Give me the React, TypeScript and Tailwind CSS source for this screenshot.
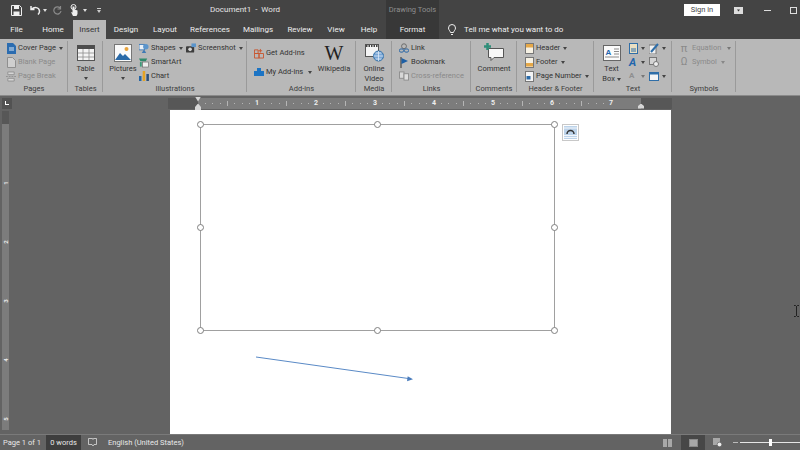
import type { ReactNode } from 'react'

/* ---------- small helpers ---------- */
function Caret({ className = 'border-t-[#444]' }: { className?: string }) {
  return <span className={`inline-block w-0 h-0 border-x-[2.5px] border-x-transparent border-t-[3px] ${className}`} />
}

function Group({ width, label, children }: { width: string; label: string; children: ReactNode }) {
  return (
    <div className={`${width} shrink-0 h-full flex flex-col relative`}>
      <div className="flex-1 flex min-h-0">{children}</div>
      <div className="h-[11px] pb-[1px] flex items-center justify-center text-[7.5px] leading-none text-[#3c3c3c]">{label}</div>
      <span className="absolute right-0 top-[2px] bottom-[3px] w-px bg-[#9a9a9a]" />
    </div>
  )
}

function Row({ icon, label, caret, off, gap = 'gap-[2px]' }: { icon: ReactNode; label: string; caret?: boolean; off?: boolean; gap?: string }) {
  return (
    <div className={`h-[14px] flex items-center ${gap} whitespace-nowrap ${off ? 'text-[#8a8a8a]' : 'text-[#333]'}`}>
      <span className="w-[10px] h-[11px] flex items-center justify-center shrink-0">{icon}</span>
      <span className="text-[7.5px] leading-none">{label}</span>
      {caret && <span className="ml-[1px] flex"><Caret className={off ? 'border-t-[#888]' : 'border-t-[#444]'} /></span>}
    </div>
  )
}

function Col({ className = '', children }: { className?: string; children: ReactNode }) {
  return <div className={`flex flex-col pt-[2px] ${className}`}>{children}</div>
}

function Large({ width, icon, lines, caret }: { width: string; icon: ReactNode; lines: string[]; caret?: boolean }) {
  return (
    <div className={`${width} shrink-0 flex flex-col items-center pt-[4px] text-[#333]`}>
      <div className="h-[19px] flex items-center justify-center">{icon}</div>
      <div className="mt-[2px] flex flex-col items-center text-[7.5px] leading-[10px] whitespace-nowrap">
        {lines.map((l) => <span key={l}>{l}</span>)}
        {caret && <span className="mt-[3px] flex"><Caret /></span>}
      </div>
    </div>
  )
}

/* ---------- ribbon icons ---------- */
const CoverIcon = (
  <svg width="9" height="11" viewBox="0 0 9 11"><path d="M0 0h6l3 3v8H0z" fill="#2b6cb0" /><path d="M2 5h5M2 7h5" stroke="#dbe8f5" /></svg>
)
const BlankIcon = (
  <svg width="9" height="11" viewBox="0 0 9 11"><path d="M.5.5h5l3 3v7h-8z" fill="#cfcfcf" stroke="#8f8f8f" /></svg>
)
const BreakIcon = (
  <svg width="11" height="11" viewBox="0 0 11 11"><path d="M2 .5h7v3H2zM2 7.5h7v3H2z" fill="#d6d6d6" stroke="#8f8f8f" /><path d="M0 5.5h11" stroke="#8f8f8f" strokeDasharray="2 1" /></svg>
)
const TableIcon = (
  <svg width="18" height="16" viewBox="0 0 18 16">
    <rect x=".5" y=".5" width="17" height="15" fill="#f4f4f4" stroke="#555" />
    <rect x="0" y="0" width="18" height="4" fill="#4d4d4d" />
    <path d="M6 4v11M12 4v11M1 8h16M1 12h16" stroke="#8d8d8d" strokeWidth=".8" />
  </svg>
)
const PictureIcon = (
  <svg width="18" height="18" viewBox="0 0 18 18">
    <rect x=".5" y=".5" width="17" height="17" fill="#fafafa" stroke="#777" />
    <circle cx="12.5" cy="5" r="2" fill="#e8a33c" />
    <path d="M1 16l5-7 3 3 2-2 6 6z" fill="#2a6aa8" />
  </svg>
)
const ShapesIcon = (
  <svg width="11" height="11" viewBox="0 0 11 11">
    <rect x="0" y="1" width="6" height="6" fill="#e9f0f7" stroke="#3f7ab5" />
    <circle cx="7.5" cy="3.5" r="3" fill="#5b95cc" />
    <path d="M3 10.5l2.5-4 2.5 4z" fill="#3f7ab5" />
  </svg>
)
const SmartIcon = (
  <svg width="11" height="11" viewBox="0 0 11 11"><path d="M0 1h9l-1.5 3h-6z" fill="#2f8a6b" /><rect x="4" y="5" width="6.5" height="5.5" fill="#efefef" stroke="#666" strokeWidth=".7" /><rect x="1" y="5" width="2" height="5" fill="#3d9a79" /></svg>
)
const ChartIcon = (
  <svg width="10" height="10" viewBox="0 0 10 10"><rect x="0" y="5" width="2.5" height="5" fill="#2565a5" /><rect x="3.7" y="0" width="2.5" height="10" fill="#e5a323" /><rect x="7.4" y="3" width="2.5" height="7" fill="#2b4f7a" /></svg>
)
const ScreenshotIcon = (
  <svg width="11" height="10" viewBox="0 0 11 10"><rect x="0" y="3" width="9" height="7" rx="1" fill="#3d3d3d" /><circle cx="4.5" cy="6.5" r="2" fill="#d5d5d5" /><rect x="6" y="0" width="5" height="4" fill="#5b95cc" /></svg>
)
const AddInsIcon = (
  <svg width="11" height="11" viewBox="0 0 11 11" fill="none" stroke="#c9542c"><path d="M.5 1.5h4v4h-4zM.5 5.5v5h5v-5zM5.5 5.5h5v5h-5zM7 .5v4M5 2.5h4" /></svg>
)
const MyAddInsIcon = (
  <svg width="10" height="10" viewBox="0 0 10 10"><path d="M3 1h4v3h3v5H0V4h3z" fill="#1c74c4" /></svg>
)
const VideoIcon = (
  <svg width="19" height="19" viewBox="0 0 19 19">
    <rect x=".5" y="1.5" width="13" height="12" fill="#f4f4f4" stroke="#555" />
    <path d="M1 3h12" stroke="#444" strokeWidth="2" strokeDasharray="1.5 1" />
    <circle cx="13.5" cy="13" r="5" fill="#7aa7d6" stroke="#2f6ea8" />
    <path d="M8.5 13h10M13.5 8v10M10.5 10h6M10.5 16h6" stroke="#eaf2fa" strokeWidth=".7" />
  </svg>
)
const LinkIcon = (
  <svg width="11" height="11" viewBox="0 0 11 11" fill="none"><circle cx="5.5" cy="3" r="2.7" stroke="#666" /><rect x=".5" y="6" width="4.5" height="3.5" rx="1.5" stroke="#1d5fa5" /><rect x="6" y="6" width="4.5" height="3.5" rx="1.5" stroke="#1d5fa5" /></svg>
)
const BookmarkIcon = (
  <svg width="9" height="11" viewBox="0 0 9 11"><path d="M1 0v11" stroke="#333" /><path d="M1.5 1L8 4 1.5 7z" fill="#1d5fa5" /></svg>
)
const CrossRefIcon = (
  <svg width="11" height="10" viewBox="0 0 11 10" fill="none" stroke="#8c8c8c"><rect x=".5" y=".5" width="5" height="7" fill="#d7d7d7" /><rect x="5.5" y="2.5" width="5" height="7" fill="#dedede" /></svg>
)
const CommentIcon = (
  <svg width="20" height="19" viewBox="0 0 20 19">
    <path d="M4.5 5.5h15v9H10l-3 3v-3H4.5z" fill="#f7f7f7" stroke="#555" />
    <path d="M0 3.5h7M3.5 0v7" stroke="#2f8f7a" strokeWidth="2.5" />
  </svg>
)
const HeaderIcon = (fill: string) => (
  <svg width="9" height="11" viewBox="0 0 9 11"><rect x=".5" y=".5" width="8" height="10" fill="#f6f1e4" stroke="#777" /><rect x="1" y={fill === 'f' ? 6 : 1} width="7" height="3.5" fill="#e5a848" /></svg>
)
const PageNumIcon = (
  <svg width="9" height="11" viewBox="0 0 9 11"><rect x=".5" y=".5" width="8" height="10" fill="#f4f4f4" stroke="#777" /><rect x="1.5" y="5" width="4" height="3.5" fill="#2a6aa8" /></svg>
)
const TextBoxIcon = (
  <svg width="18" height="16" viewBox="0 0 18 16">
    <rect x=".5" y=".5" width="17" height="15" fill="#fbfbfb" stroke="#666" />
    <path d="M11 4h5M11 6.5h5M11 9h5M2 12h14" stroke="#8b8b8b" />
    <text x="2.5" y="9.5" fontSize="8" fontWeight="700" fill="#1f66ad" fontFamily="Liberation Sans">A</text>
  </svg>
)

/* ---------- page bits ---------- */
function Handle({ className }: { className: string }) {
  return <span className={`absolute w-[7px] h-[7px] rounded-full bg-white border border-[#7f7f7f] ${className}`} />
}

const tabs: [string, string][] = [
  ['File', 'w-[33px]'],
  ['Home', 'w-[40px]'],
]
const tabsAfter: [string, string][] = [
  ['Design', 'w-[40px]'],
  ['Layout', 'w-[38px]'],
  ['References', 'w-[52px]'],
  ['Mailings', 'w-[44px]'],
  ['Review', 'w-[40px]'],
  ['View', 'w-[32px]'],
  ['Help', 'w-[34px]'],
]

function Ticks({ n }: { n: number }) {
  return (
    <div className="w-[59px] shrink-0 h-full flex items-center justify-between relative pl-[7px] pr-[7px]">
      {[1, 2, 3, 4, 5, 6, 7].map((i) => <span key={i} className={`bg-[#b5b5b5] ${i === 4 ? 'w-px h-[5px]' : 'w-px h-px'}`} />)}
      <span className="w-[4px] text-center text-[7px] leading-none font-bold text-[#eeeeee] absolute right-[-2px]">{n}</span>
    </div>
  )
}

export default function App() {
  return (
    <div className="w-[800px] h-[450px] overflow-hidden flex flex-col bg-[#636363] relative" style={{ fontFamily: 'Roboto, "Liberation Sans", sans-serif' }}>
      {/* Title bar */}
      <div className="h-[20px] shrink-0 flex bg-[#444444] text-[#e6e6e6]">
        <div className="w-[386px] shrink-0 flex items-center relative">
          <svg className="ml-[11px]" width="11" height="11" viewBox="0 0 11 11"><path d="M.5.5h8l2 2v8H.5z" fill="none" stroke="#eee" /><rect x="3" y="1" width="5" height="3" fill="#eee" /><rect x="2.5" y="6.5" width="6" height="4" fill="#eee" /></svg>
          <svg className="ml-[8px]" width="11" height="10" viewBox="0 0 11 10" fill="none" stroke="#eee" strokeWidth="1.5"><path d="M1 1v3.5h3.500M1.500 4.500C4 1.500 9 2 9.500 6c.1 1.500-.5 2.500-1.500 3.500" /></svg>
          <span className="ml-[2px] flex"><Caret className="border-t-[#ddd]" /></span>
          <svg className="ml-[6px]" width="9" height="10" viewBox="0 0 9 10" fill="none" stroke="#8a8a8a" strokeWidth="1.2"><path d="M7.5 1v3H4.500M7.500 3.500A3.600 3.600 0 1 0 8 6" /></svg>
          <svg className="ml-[8px]" width="9" height="12" viewBox="0 0 9 12"><circle cx="3.5" cy="3" r="2.500" fill="none" stroke="#eee" /><path d="M2.500 2.500h2v3l3 1v3.500l-1 2H3L1 8l1.500 .5z" fill="#eee" /></svg>
          <span className="ml-[4px] flex"><Caret className="border-t-[#ddd]" /></span>
          <span className="ml-[10px] w-[4px] h-[5px] flex flex-col justify-between"><span className="h-px bg-[#ccc]" /><span className="flex"><Caret className="border-t-[#ccc]" /></span></span>
          <span className="absolute left-[210px] text-[8px] leading-none whitespace-nowrap">Document1&nbsp; -&nbsp; Word</span>
        </div>
        <div className="w-[53px] shrink-0 bg-[#383838] flex items-center justify-center text-[7.5px] text-[#8f8f8f] whitespace-nowrap">Drawing Tools</div>
        <div className="flex-1 flex items-center pl-[245px]">
          <span className="w-[36px] h-[12px] bg-white text-[#444] text-[7.5px] leading-[12px] text-center shrink-0">Sign in</span>
          <svg className="ml-[14px] shrink-0" width="9" height="7" viewBox="0 0 9 7"><rect width="9" height="7" fill="#ddd" /><path d="M3 2.500h3L4.500 4.500z" fill="#333" /></svg>
          <span className="ml-[21px] w-[7px] h-px bg-[#ddd] shrink-0" />
          <span className="ml-[19px] w-[7px] h-[7px] border border-[#ddd] shrink-0" />
        </div>
      </div>

      {/* Tabs */}
      <div className="h-[19px] shrink-0 flex bg-[#444444] text-[#eeeeee] text-[8px]">
        {tabs.map(([t, w]) => <div key={t} className={`${w} flex items-center justify-center`}>{t}</div>)}
        <div className="w-[33px] bg-[#b8b8b8] text-[#333] flex items-center justify-center">Insert</div>
        {tabsAfter.map(([t, w]) => <div key={t} className={`${w} flex items-center justify-center`}>{t}</div>)}
        <div className="w-[53px] bg-[#383838] flex items-center justify-center">Format</div>
        <svg className="ml-[9px] self-center" width="8" height="12" viewBox="0 0 8 12" fill="none" stroke="#eee"><path d="M2.500 8.500C2 6.500.5 6 .5 4a3.500 3.500 0 0 1 7 0c0 2-1.500 2.500-2 4.500zM3 10.500h2" /></svg>
        <span className="ml-[8px] self-center whitespace-nowrap">Tell me what you want to do</span>
      </div>

      {/* Ribbon */}
      <div className="h-[57px] shrink-0 flex bg-[#b8b8b8] border-b border-[#8a8a8a]">
        <Group width="w-[68px]" label="Pages">
          <Col className="pl-[6px]">
            <Row icon={CoverIcon} label="Cover Page" caret />
            <Row icon={BlankIcon} label="Blank Page" off />
            <Row icon={BreakIcon} label="Page Break" off />
          </Col>
        </Group>
        <Group width="w-[35px]" label="Tables">
          <Large width="w-[35px]" icon={TableIcon} lines={['Table']} caret />
        </Group>
        <Group width="w-[144px]" label="Illustrations">
          <Large width="w-[40px] -mr-[4px]" icon={PictureIcon} lines={['Pictures']} caret />
          <Col className="w-[47px]">
            <Row icon={ShapesIcon} label="Shapes" caret />
            <Row icon={SmartIcon} label="SmartArt" />
            <Row icon={ChartIcon} label="Chart" />
          </Col>
          <Col>
            <Row icon={ScreenshotIcon} label="Screenshot" caret />
          </Col>
        </Group>
        <Group width="w-[109px]" label="Add-ins">
          <div className="w-[67px] pl-[7px] flex flex-col gap-[5px] pt-[7px]">
            <Row icon={AddInsIcon} label="Get Add-ins" />
            <div className="flex items-center">
              <Row icon={MyAddInsIcon} label="My Add-ins" />
              <span className="ml-[5px] flex"><Caret /></span>
            </div>
          </div>
          <Large width="w-[40px]" icon={<span className="text-[20px] leading-none text-[#222]" style={{ fontFamily: '"Liberation Serif", serif' }}>W</span>} lines={['Wikipedia']} />
        </Group>
        <Group width="w-[36px]" label="Media">
          <Large width="w-[36px]" icon={VideoIcon} lines={['Online', 'Video']} />
        </Group>
        <Group width="w-[79px]" label="Links">
          <Col className="pl-[7px]">
            <Row icon={LinkIcon} label="Link" />
            <Row icon={BookmarkIcon} label="Bookmark" />
            <Row icon={CrossRefIcon} label="Cross-reference" off />
          </Col>
        </Group>
        <Group width="w-[46px]" label="Comments">
          <Large width="w-[46px]" icon={CommentIcon} lines={['Comment']} />
        </Group>
        <Group width="w-[77px]" label="Header & Footer">
          <Col className="pl-[7px]">
            <Row icon={HeaderIcon('h')} label="Header" caret />
            <Row icon={HeaderIcon('f')} label="Footer" caret />
            <Row icon={PageNumIcon} label="Page Number" caret />
          </Col>
        </Group>
        <Group width="w-[78px]" label="Text">
          <div className="w-[35px] shrink-0 flex flex-col items-center pt-[5px] text-[#333]">
            <div className="h-[17px] flex items-center">{TextBoxIcon}</div>
            <div className="mt-[3px] text-[7.5px] leading-[10px] text-center">Text<br />Box <span className="inline-flex align-middle"><Caret /></span></div>
          </div>
          <div className="pt-[2px] grid grid-cols-[20px_20px] auto-rows-[14px] items-center">
            <span className="flex items-center gap-[3px]"><svg width="9" height="11" viewBox="0 0 9 11"><rect x=".5" y=".5" width="8" height="10" fill="#e9dfc2" stroke="#2f6ea8" /><path d="M2 6h5M2 8h5" stroke="#2f6ea8" /></svg><Caret /></span>
            <span className="flex items-center gap-[3px]"><svg width="10" height="11" viewBox="0 0 10 11"><rect y="2" width="7" height="9" fill="#f1f1f1" stroke="#777" /><path d="M2 9l7-8" stroke="#2f6ea8" strokeWidth="2" /></svg><Caret /></span>
            <span className="flex items-center gap-[3px]"><span className="w-[9px] text-[11px] leading-none font-bold italic text-[#1f66ad]">A</span><Caret /></span>
            <span><svg width="10" height="10" viewBox="0 0 10 10"><rect x=".5" y=".5" width="7" height="7" fill="#d4d4d4" stroke="#777" /><circle cx="7" cy="7" r="2.500" fill="#eee" stroke="#777" /></svg></span>
            <span className="flex items-center gap-[3px]"><span className="w-[9px] text-[8px] leading-none font-bold text-[#8f8f8f]">A</span><Caret className="border-t-[#777]" /></span>
            <span className="flex items-center gap-[3px]"><svg width="10" height="9" viewBox="0 0 10 9"><rect x=".5" y=".5" width="9" height="8" fill="#f5f5f5" stroke="#2f6ea8" /><rect width="10" height="2.500" fill="#2f6ea8" /></svg><Caret /></span>
          </div>
        </Group>
        <Group width="w-[64px]" label="Symbols">
          <Col className="pl-[7px]">
            <div className="flex items-center">
              <Row icon={<span className="text-[11px] leading-none text-[#8a8a8a]">π</span>} label="Equation" off gap="gap-[3px]" />
              <span className="ml-[6px] flex"><Caret className="border-t-[#777]" /></span>
            </div>
            <Row icon={<span className="text-[10px] leading-none text-[#8a8a8a]">Ω</span>} label="Symbol" caret off gap="gap-[3px]" />
          </Col>
        </Group>
      </div>

      {/* Horizontal ruler */}
      <div className="h-[14px] shrink-0 flex items-center">
        <div className="ml-[2px] w-[10px] h-[11px] bg-[#525252] flex items-center justify-center">
          <span className="w-[4px] h-[4px] border-l border-b border-white" />
        </div>
        <div className="ml-[156px] w-[504px] h-[11px] flex bg-[#575757] relative">
          <div className="ml-[30px] w-[443px] h-full bg-[#7c7c7c] flex items-center overflow-hidden">
            {[1, 2, 3, 4, 5, 6, 7].map((n) => <Ticks key={n} n={n} />)}
          </div>
          <span className="absolute left-[27px] -top-[1px] w-[6px] h-[5px] bg-[#d6d6d6] [clip-path:polygon(0_0,100%_0,50%_100%)]" />
          <span className="absolute left-[27px] top-[6px] w-[6px] h-[8px] bg-[#d6d6d6] [clip-path:polygon(50%_0,100%_45%,100%_100%,0_100%,0_45%)]" />
          <span className="absolute left-[470px] top-[6px] w-[6px] h-[5px] bg-[#d6d6d6] [clip-path:polygon(50%_0,100%_50%,100%_100%,0_100%,0_50%)]" />
        </div>
      </div>

      {/* Document area */}
      <div className="flex-1 min-h-0 flex">
        <div className="ml-[2px] mt-[1px] mb-[4px] w-[7px] shrink-0 bg-[#7c7c7c] flex flex-col relative overflow-hidden">
          <div className="h-[13px] shrink-0 bg-[#575757]" />
          {[1, 2, 3, 4, 5].map((n) => (
            <div key={n} className="h-[59px] shrink-0 flex flex-col items-center justify-end">
              <span className="text-[6px] leading-none font-bold text-[#eeeeee] -rotate-90 translate-y-[3px]">{n}</span>
            </div>
          ))}
        </div>
        <div className="ml-[161px] w-[501px] h-full bg-white relative">
          {/* Canvas */}
          <div className="absolute left-[30px] top-[14px] w-[355px] h-[207px] border border-[#a0a0a0]">
            <Handle className="-left-[4px] -top-[4px]" />
            <Handle className="left-[173px] -top-[4px]" />
            <Handle className="-right-[4px] -top-[4px]" />
            <Handle className="-left-[4px] top-[99px]" />
            <Handle className="-right-[4px] top-[99px]" />
            <Handle className="-left-[4px] -bottom-[4px]" />
            <Handle className="left-[173px] -bottom-[4px]" />
            <Handle className="-right-[4px] -bottom-[4px]" />
          </div>
          {/* Layout options */}
          <div className="absolute left-[392px] top-[14px] w-[17px] h-[17px] border border-[#c8c8c8] bg-white p-[1px]">
            <svg width="13" height="13" viewBox="0 0 13 13">
              <rect width="13" height="13" fill="#bcd3ea" />
              <path d="M0 9.500h13M0 11.500h13M0 2h13" stroke="#f2f6fb" />
              <path d="M3 8a3.500 3.500 0 0 1 7 0" fill="none" stroke="#333" strokeWidth="1.5" />
            </svg>
          </div>
          {/* Arrow */}
          <svg className="absolute left-[86px] top-[246px]" width="245" height="28" viewBox="0 0 245 28">
            <path d="M0 1L153 22.600" stroke="#5a8ac6" strokeWidth="1" />
            <path d="M157 23.300L151 25.200L151.700 20.300z" fill="#4a7cbd" />
          </svg>
        </div>
      </div>

      {/* I-beam cursor */}
      <svg className="absolute left-[793px] top-[305px]" width="7" height="12" viewBox="0 0 7 12" fill="none" stroke="#111" strokeWidth=".8"><path d="M1 .5h1.500L3.500 1.500 4.500.5H6M3.500 1.500v9M1 11.500h1.500l1-1 1 1H6" /></svg>

      {/* Status bar */}
      <div className="h-[16px] shrink-0 flex items-center bg-[#636363] border-t border-[#7a7a7a] text-[7.5px] text-[#e8e8e8]">
        <span className="ml-[3px] w-[43px] whitespace-nowrap">Page 1 of 1</span>
        <span className="w-[35px] h-full bg-[#3e3e3e] flex items-center justify-center whitespace-nowrap">0 words</span>
        <svg className="ml-[7px]" width="10" height="9" viewBox="0 0 10 9" fill="none" stroke="#ddd" strokeWidth=".8"><path d="M.5.5h4l.5 1 .5-1h3v6H6L5 8 4 6.500H.5z" /></svg>
        <span className="ml-[10px] whitespace-nowrap">English (United States)</span>
        <div className="ml-auto flex items-center h-full">
          <svg width="9" height="8" viewBox="0 0 9 8"><path d="M0 0h4v8H0zM5 0h4v8H5z" fill="#a8a8a8" /></svg>
          <div className="ml-[9px] w-[24px] h-full bg-[#474747] flex items-center justify-center"><span className="w-[9px] h-[8px] bg-[#a8a8a8] border border-[#8a8a8a]" /></div>
          <svg className="ml-[8px]" width="9" height="9" viewBox="0 0 9 9"><rect width="7" height="7" fill="#a8a8a8" /><circle cx="6.500" cy="6.500" r="2.300" fill="#eee" stroke="#555" strokeWidth=".6" /></svg>
          <span className="ml-[11px] w-[5px] h-px bg-[#bbb]" />
          <div className="ml-[2px] w-[60px] h-px bg-[#e5e5e5] relative">
            <span className="absolute left-[29px] -top-[3px] w-[3px] h-[7px] bg-white" />
          </div>
        </div>
      </div>
    </div>
  )
}
